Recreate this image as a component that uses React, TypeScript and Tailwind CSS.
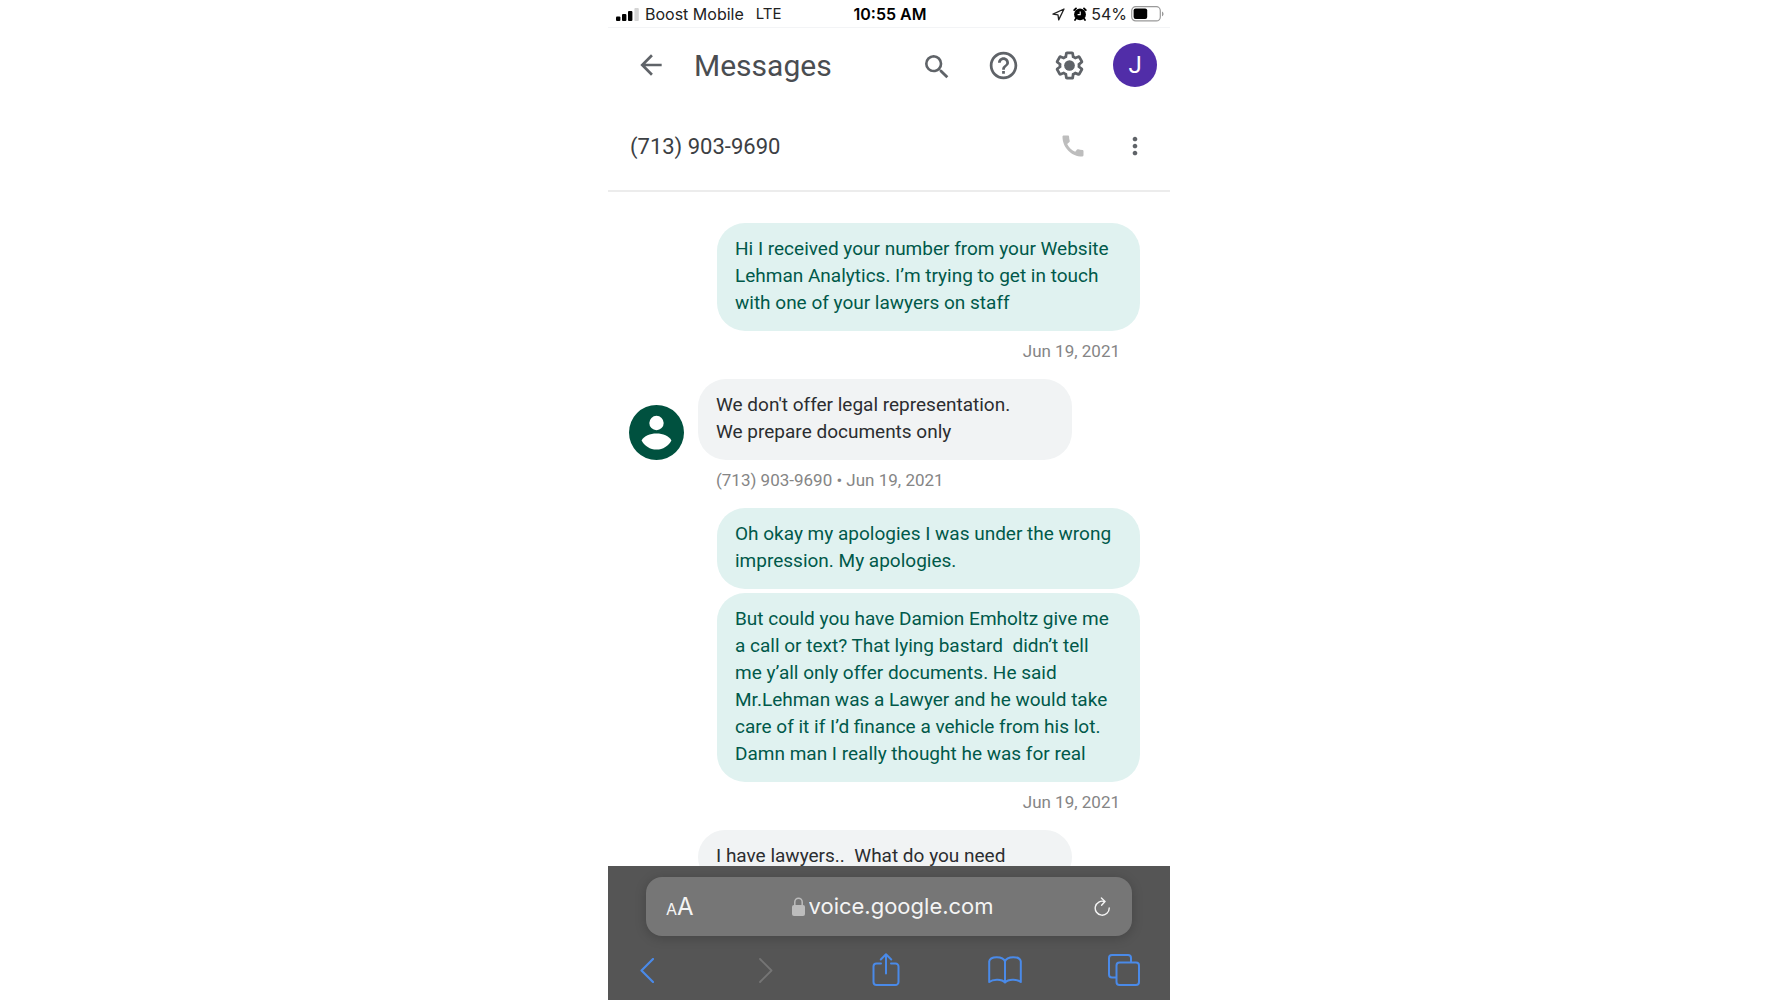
import type { ReactNode } from "react";
import { MdArrowBack, MdCall, MdHelpOutline, MdMoreVert, MdSearch } from "react-icons/md";

interface Message {
  id: number;
  from: "me" | "them";
  text: string;
  meta?: string;
}

const NUMBER = "(713) 903-9690";

const MESSAGES: Message[] = [
  {
    id: 1,
    from: "me",
    text: "Hi I received your number from your Website Lehman Analytics. I’m trying to get in touch with one of your lawyers on staff",
    meta: "Jun 19, 2021",
  },
  {
    id: 2,
    from: "them",
    text: "We don't offer legal representation. We prepare documents only",
    meta: `${NUMBER} • Jun 19, 2021`,
  },
  {
    id: 3,
    from: "me",
    text: "Oh okay my apologies I was under the wrong impression. My apologies.",
  },
  {
    id: 4,
    from: "me",
    text: "But could you have Damion Emholtz give me a call or text? That lying bastard  didn’t tell me y’all only offer documents. He said Mr.Lehman was a Lawyer and he would take care of it if I’d finance a vehicle from his lot. Damn man I really thought he was for real",
    meta: "Jun 19, 2021",
  },
  { id: 5, from: "them", text: "I have lawyers..  What do you need" },
];

function IconButton({ label, children }: { label: string; children: ReactNode }) {
  return (
    <button type="button" aria-label={label} className="flex h-11 w-11 items-center justify-center">
      {children}
    </button>
  );
}

function StatusBar() {
  return (
    <div className="grid h-7 shrink-0 grid-cols-[1fr_auto_1fr] items-center border-b border-gray-100 pt-px pl-2 pr-[6px] font-['Inter',sans-serif] text-base text-[#222]">
      <div className="flex items-center gap-1.5">
        <svg width="23" height="13" viewBox="0 0 23 13" fill="#000">
          <rect x="0" y="8.5" width="4.4" height="4.5" rx="1" />
          <rect x="6" y="6" width="4.4" height="7" rx="1" />
          <rect x="12" y="3" width="4.4" height="10" rx="1" />
          <rect x="18.4" y="0" width="4.4" height="13" rx="1" fill="#d4d4d4" />
        </svg>
        <span>Boost Mobile</span>
        <span className="ml-1.5 text-[15px]">LTE</span>
      </div>
      <span className="font-semibold text-black">10:55 AM</span>
      <div className="flex items-center justify-end gap-1">
        <svg width="13" height="13" viewBox="0 0 13 13" fill="none" stroke="#222" strokeWidth="1.3" strokeLinejoin="round" className="mr-1">
          <path d="M12 1 1 6.2l5 .7.7 5z" />
        </svg>
        <svg width="14" height="14" viewBox="0 0 14 14">
          <circle cx="7" cy="7.4" r="5.9" fill="#000" />
          <path d="M1.200 3.200 3 1.400M12.800 3.200 11 1.400M3 11.600 2 13M11 11.600l1 1.400" stroke="#000" strokeWidth="1.8" strokeLinecap="round" />
          <path d="M7.200 4.400v3.200H4.600" fill="none" stroke="#fff" strokeWidth="1.1" />
        </svg>
        <span>54%</span>
        <svg width="33" height="16" viewBox="0 0 33 16">
          <rect x="0.7" y="0.7" width="28.6" height="14.2" rx="4" fill="none" stroke="#999" strokeWidth="1.2" />
          <rect x="2.6" y="2.6" width="13.6" height="10.4" rx="2" fill="#000" />
          <path d="M31 5.400c2 .8 2 4 0 4.800z" fill="#999" />
        </svg>
      </div>
    </div>
  );
}

function Header() {
  return (
    <header className="flex h-[74px] shrink-0 items-center pl-[21px] pr-[13px] text-[#5f6368]">
      <IconButton label="Back">
        <MdArrowBack size={32} />
      </IconButton>
      <h1 className="ml-[21px] text-[30px] text-[#4a4d51]">Messages</h1>
      <div className="ml-auto flex items-center gap-[22px]">
        <IconButton label="Search">
          <MdSearch size={32} className="mt-1" />
        </IconButton>
        <IconButton label="Help">
          <MdHelpOutline size={33} />
        </IconButton>
        <IconButton label="Settings">
          <svg width="33" height="33" viewBox="0 0 24 24" fill="currentColor">
            <path d="M13.85 22.25h-3.7c-.74 0-1.36-.54-1.45-1.27l-.27-1.89c-.27-.14-.53-.29-.79-.46l-1.8.72c-.7.26-1.47-.03-1.81-.65L2.2 15.53c-.35-.66-.2-1.44.36-1.88l1.53-1.19c-.01-.15-.02-.3-.02-.46 0-.15.01-.31.02-.46l-1.52-1.19c-.59-.45-.74-1.26-.37-1.88l1.85-3.19c.34-.62 1.11-.9 1.79-.63l1.81.73c.26-.17.52-.32.78-.46l.27-1.91c.09-.7.71-1.25 1.44-1.25h3.7c.74 0 1.36.54 1.45 1.27l.27 1.89c.27.14.53.29.79.46l1.8-.72c.71-.26 1.48.03 1.82.65l1.84 3.18c.36.66.2 1.44-.36 1.88l-1.52 1.19c.01.15.02.3.02.46s-.01.31-.02.46l1.52 1.19c.56.45.72 1.23.37 1.86l-1.86 3.22c-.34.62-1.11.9-1.8.63l-1.8-.72c-.26.17-.52.32-.78.46l-.27 1.91c-.1.68-.72 1.22-1.46 1.22zm-3.23-2h2.76l.37-2.55.53-.22c.44-.18.88-.44 1.34-.78l.45-.34 2.38.96 1.38-2.4-2.03-1.58.07-.56c.03-.26.06-.51.06-.78s-.03-.53-.06-.78l-.07-.56 2.03-1.58-1.39-2.4-2.39.96-.45-.35c-.42-.32-.87-.58-1.33-.77l-.52-.22-.37-2.55h-2.76l-.37 2.55-.53.21c-.44.19-.88.44-1.34.79l-.45.33-2.38-.95-1.39 2.39 2.03 1.58-.07.56a7 7 0 0 0-.06.79c0 .26.02.53.06.78l.07.56-2.03 1.58 1.38 2.4 2.39-.96.45.35c.43.33.86.58 1.33.77l.53.22.38 2.55z" />
            <circle cx="12" cy="12" r="3.9" />
          </svg>
        </IconButton>
        <button
          type="button"
          aria-label="Account"
          className="flex h-11 w-11 items-center justify-center rounded-full bg-[#512da8] text-2xl text-white"
        >
          J
        </button>
      </div>
    </header>
  );
}

function ContactBar() {
  return (
    <div className="flex h-[90px] shrink-0 items-center border-b-2 border-[#ececec] pl-[22px] pr-[13px]">
      <h2 className="text-[22px] text-[#3c4043]">{NUMBER}</h2>
      <div className="ml-auto flex items-center gap-[18px]">
        <IconButton label="Call">
          <MdCall size={28} className="text-[#bdbdbd]" />
        </IconButton>
        <IconButton label="More options">
          <MdMoreVert size={28} className="text-[#5f6368]" />
        </IconButton>
      </div>
    </div>
  );
}

function Avatar() {
  return (
    <svg width="55" height="55" viewBox="0 0 55 55">
      <circle cx="27.5" cy="27.5" r="27.5" fill="#00513f" />
      <circle cx="27.5" cy="18" r="7.2" fill="#fff" />
      <path d="M12.600 35.500C15 31 21 28.600 27.500 28.600S40 31 42.400 35.500C39.500 41 34 44.600 27.500 44.600S15.500 41 12.600 35.500z" fill="#fff" />
    </svg>
  );
}

function Bubble({ message }: { message: Message }) {
  const mine = message.from === "me";
  return (
    <li className={mine ? "flex flex-col items-end pr-[30px]" : "flex flex-col items-start pl-[21px]"}>
      <div className={mine ? "w-[423px]" : "flex w-[443px] items-end gap-[14px]"}>
        {!mine && <div className="w-[55px] shrink-0">{message.meta && <Avatar />}</div>}
        <p
          className={
            mine
              ? "rounded-[28px] bg-[#e0f2f0] pt-3 pr-6 pb-[15px] pl-[18px] text-[19px] leading-[27px] whitespace-pre-wrap text-[#00594a]"
              : "grow rounded-[28px] bg-[#f1f3f4] pt-3 pr-12 pb-[15px] pl-[18px] text-[19px] leading-[27px] whitespace-pre-wrap text-[#2b2d30]"
          }
        >
          {message.text}
        </p>
      </div>
      {message.meta ? (
        <span
          className={
            mine
              ? "mt-2 mb-4 pr-5 text-[17px] leading-6 text-[#858585]"
              : "mt-2 mb-4 pl-[87px] text-[17px] leading-6 text-[#858585]"
          }
        >
          {message.meta}
        </span>
      ) : (
        <div className="h-1" />
      )}
    </li>
  );
}

function BrowserBar() {
  return (
    <footer className="shrink-0 bg-[#555] font-['Inter',sans-serif]">
      <div className="px-[38px] pt-[11px]">
        <div className="flex h-[59px] items-center justify-between rounded-2xl bg-[#767676] pr-3 pl-5 text-[#f4f4f4] shadow-[0_2px_12px_rgba(0,0,0,0.2)]">
          <button type="button" aria-label="Page settings" className="flex w-9 items-baseline">
            <span className="text-base">A</span>
            <span className="text-2xl">A</span>
          </button>
          <div className="flex items-center gap-1">
            <svg width="13" height="19" viewBox="0 0 13 19" aria-hidden="true">
              <rect x="0" y="8" width="13" height="11" rx="2" fill="#bcbcbc" />
              <path d="M2.800 8.500V5a3.700 3.700 0 0 1 7.400 0v3.500" fill="none" stroke="#bcbcbc" strokeWidth="1.5" />
            </svg>
            <input aria-label="Address" defaultValue="voice.google.com" className="w-[186px] bg-transparent text-[22px] outline-none" />
          </div>
          <button type="button" aria-label="Reload" className="flex w-9 justify-center">
            <svg width="17" height="19" viewBox="0 0 17 19" fill="none" stroke="currentColor" strokeWidth="1.4" strokeLinecap="round" strokeLinejoin="round">
              <path d="M10.600 4.600A7 7 0 1 0 15.200 11" />
              <path d="M7.400 1 11 4.500 7.600 8.300" />
            </svg>
          </button>
        </div>
      </div>
      <nav className="flex h-16 items-center justify-between pt-1 pl-[17px] pr-6 text-[#4a8ae8]">
        <IconButton label="Previous page">
          <svg width="14" height="25" viewBox="0 0 14 25" fill="none" stroke="currentColor" strokeWidth="2.2" strokeLinecap="round" strokeLinejoin="round">
            <path d="M13 1 1.500 12.500 13 24" />
          </svg>
        </IconButton>
        <IconButton label="Next page">
          <svg width="14" height="25" viewBox="0 0 14 25" fill="none" stroke="#757575" strokeWidth="1.8" strokeLinecap="round" strokeLinejoin="round">
            <path d="M1 1l11.500 11.500L1 24" />
          </svg>
        </IconButton>
        <IconButton label="Share">
          <svg width="28" height="34" viewBox="0 0 28 34" fill="none" stroke="currentColor" strokeWidth="2" strokeLinecap="round" strokeLinejoin="round">
            <path d="M9 10.500H4.500a3 3 0 0 0-3 3V29a3 3 0 0 0 3 3h19a3 3 0 0 0 3-3V13.500a3 3 0 0 0-3-3H19" />
            <path d="M14 20.500V1.500M8.800 6.500 14 1.300l5.200 5.200" />
          </svg>
        </IconButton>
        <IconButton label="Bookmarks">
          <svg width="34" height="28" viewBox="0 0 34 28" fill="none" stroke="currentColor" strokeWidth="2" strokeLinejoin="round">
            <path d="M17 26.500C14 23 5 22.800 1.200 26V5.500C2-.2 15-.4 17 5.500zM17 26.500C20 23 29 22.800 32.800 26V5.500C32-.2 19-.4 17 5.500z" />
          </svg>
        </IconButton>
        <IconButton label="Tabs">
          <svg width="32" height="32" viewBox="0 0 32 32" fill="none" stroke="currentColor" strokeWidth="2">
            <path d="M8.500 23.500H4a3 3 0 0 1-3-3V4a3 3 0 0 1 3-3h16a3 3 0 0 1 3 3v4" />
            <rect x="8.500" y="8.500" width="22.500" height="22.500" rx="3" />
          </svg>
        </IconButton>
      </nav>
    </footer>
  );
}

export default function App() {
  return (
    <div className="min-h-screen bg-white">
      <main className="mx-auto flex h-screen max-w-[562px] flex-col overflow-hidden bg-white font-['Roboto',sans-serif]">
        <StatusBar />
        <Header />
        <ContactBar />
        <ul className="min-h-0 flex-1 overflow-hidden pt-[31px]">
          {MESSAGES.map((m) => (
            <Bubble key={m.id} message={m} />
          ))}
        </ul>
        <BrowserBar />
      </main>
    </div>
  );
}
